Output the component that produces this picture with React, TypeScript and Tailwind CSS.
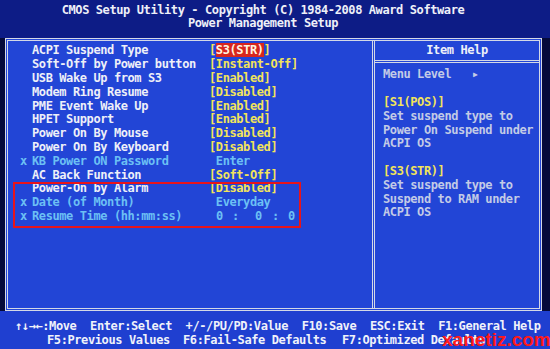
const rows = [
  { label: "ACPI Suspend Type", value: "S3(STR)", kind: "sel" },
  { label: "Soft-Off by Power button", value: "[Instant-Off]" },
  { label: "USB Wake Up from S3", value: "[Enabled]" },
  { label: "Modem Ring Resume", value: "[Disabled]" },
  { label: "PME Event Wake Up", value: "[Enabled]" },
  { label: "HPET Support", value: "[Enabled]" },
  { label: "Power On By Mouse", value: "[Disabled]" },
  { label: "Power On By Keyboard", value: "[Disabled]" },
  { label: "KB Power ON Password", value: " Enter", kind: "off" },
  { label: "AC Back Function", value: "[Soft-Off]" },
  { label: "Power-On by Alarm", value: "[Disabled]" },
  { label: "Date (of Month)", value: " Everyday", kind: "off" },
  { label: "Resume Time (hh:mm:ss)", value: "time", kind: "off" },
];

const help: [string, string][] = [
  ["Menu Level   \u25B8", "gray"],
  ["", ""],
  ["[S1(POS)]", "yel"],
  ["Set suspend type to", "gray"],
  ["Power On Suspend under", "gray"],
  ["ACPI OS", "gray"],
  ["", ""],
  ["[S3(STR)]", "yel"],
  ["Set suspend type to", "gray"],
  ["Suspend to RAM under", "gray"],
  ["ACPI OS", "gray"],
];

function Value({ row }: { row: (typeof rows)[number] }) {
  if (row.kind === "sel") {
    return (
      <span className="text-[#f2e45a]">
        [<span className="bg-[#d7261e] text-[#fff4e0]">{row.value}</span>]
      </span>
    );
  }
  if (row.value === "time") {
    return (
      <span className="flex text-[#6cc0f4] pl-[7px]">
        <span className="w-[16px]">0</span>
        <span className="w-[23px]">:</span>
        <span className="w-[17px]">0</span>
        <span className="w-[16px]">:</span>
        <span>0</span>
      </span>
    );
  }
  return <span className={row.kind === "off" ? "text-[#6cc0f4]" : "text-[#f2e45a]"}>{row.value}</span>;
}

export default function App() {
  return (
    <div
      className="relative w-[550px] h-[349px] overflow-hidden bg-[#050a3a] font-bold text-[12px] leading-[13px] tracking-[-0.4px] whitespace-pre text-[#eef0f8]"
      style={{ fontFamily: '"DejaVu Sans Mono", "Liberation Mono", monospace' }}
    >
      {/* title strip */}
      <div className="h-[38px] bg-[#0d1c86] flex flex-col items-center pr-[24px] pt-[4px] leading-[12.5px]">
        <div>CMOS Setup Utility - Copyright (C) 1984-2008 Award Software</div>
        <div>Power Management Setup</div>
      </div>

      {/* main frame */}
      <div className="ml-[5px] w-[537px] h-[273px] border-[3px] border-double border-[#d4d8e6] bg-[#2245d6] flex">
        <div className="w-[364px] pt-[3px]">
          {rows.map((r) => (
            <div key={r.label} className="h-[13.8px] flex items-center">
              <span className="w-[24px] pl-[12px] text-[#6cc0f4]">{r.kind === "off" ? "x" : ""}</span>
              <span className={"w-[177px] " + (r.kind === "off" ? "text-[#6cc0f4]" : "")}>{r.label}</span>
              <Value row={r} />
            </div>
          ))}
        </div>
        <div className="flex-1 border-l-[3px] border-double border-[#d4d8e6] flex flex-col">
          <div className="h-[22px] border-b-[3px] border-double border-[#d4d8e6] flex items-center justify-center">
            Item Help
          </div>
          <div className="pt-[5px] pl-[8px]">
            {help.map(([t, c], i) => (
              <div
                key={i}
                className={"h-[13.8px] flex items-center " + (c === "yel" ? "text-[#f2e45a]" : "text-[#c3cbe6]")}
              >
                {t}
              </div>
            ))}
          </div>
        </div>
      </div>

      {/* key bar */}
      <div className="h-[38px] bg-[#1f3fd0] pt-[9px] leading-[13.5px] text-[#f0f2fa]">
        <div className="pl-[15px]">{"\u2191\u2193\u2192\u2190:Move  Enter:Select  +/-/PU/PD:Value  F10:Save  ESC:Exit  F1:General Help"}</div>
        <div className="pl-[47px] flex">
          <span className="w-[136px]">F5:Previous Values</span>
          <span className="w-[159px]">F6:Fail-Safe Defaults</span>
          <span>F7:Optimized Defaults</span>
        </div>
      </div>

      {/* highlight box drawn over the alarm rows */}
      <div className="absolute left-[13px] top-[182px] w-[288px] h-[46px] border-2 border-[#e8141a]" />

      {/* watermark */}
      <div
        className="absolute left-[442px] top-[331px] text-[19px] leading-[18px] tracking-[0px] font-bold text-[#ff1a1a]"
        style={{ fontFamily: '"Liberation Sans", Arial, sans-serif' }}
      >
        xanetiz.com
      </div>
    </div>
  );
}
